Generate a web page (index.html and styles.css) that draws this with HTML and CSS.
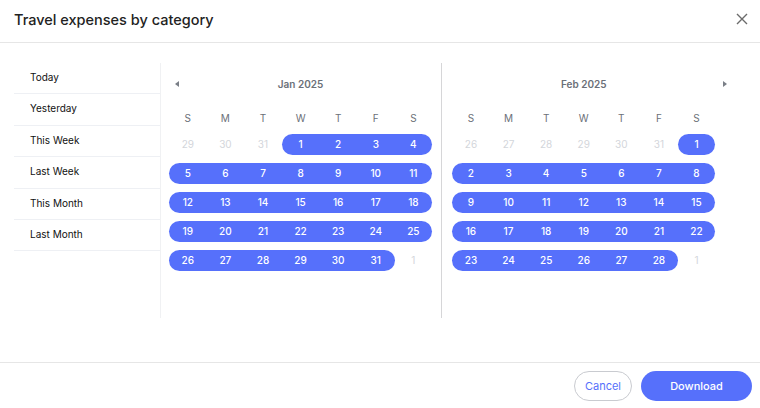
FILE: index.html
```html
<!DOCTYPE html>
<html lang="en">
<head>
    <meta charset="UTF-8">
    <meta name="viewport" content="width=device-width, initial-scale=1.0">
    <title>Travel expenses by category</title>
    <link rel="stylesheet" href="styles.css">
</head>
<body>
<div class="modal">
    <div class="modal-header">
        <h2>Travel expenses by category</h2>
        <button class="close" aria-label="Close">
            <svg width="12" height="12" viewBox="0 0 12 12"><path d="M1 1L11 11M11 1L1 11" stroke="#6b6b6b" stroke-width="1.4" fill="none"/></svg>
        </button>
    </div>

    <div class="modal-body">
        <!-- quick ranges -->
        <ul class="ranges">
            <li>Today</li>
            <li>Yesterday</li>
            <li>This Week</li>
            <li>Last Week</li>
            <li>This Month</li>
            <li>Last Month</li>
        </ul>

        <!-- January -->
        <div class="month first-month">
            <div class="month-head">
                <span class="arrow prev"></span>
                <span class="month-title">Jan 2025</span>
                <span></span>
            </div>
            <div class="weekdays">
                <span>S</span><span>M</span><span>T</span><span>W</span><span>T</span><span>F</span><span>S</span>
            </div>
            <div class="weeks">
                <div class="week">
                    <span class="day muted">29</span><span class="day muted">30</span><span class="day muted">31</span>
                    <span class="day sel start">1</span><span class="day sel">2</span><span class="day sel">3</span><span class="day sel end">4</span>
                </div>
                <div class="week">
                    <span class="day sel start">5</span><span class="day sel">6</span><span class="day sel">7</span><span class="day sel">8</span><span class="day sel">9</span><span class="day sel">10</span><span class="day sel end">11</span>
                </div>
                <div class="week">
                    <span class="day sel start">12</span><span class="day sel">13</span><span class="day sel">14</span><span class="day sel">15</span><span class="day sel">16</span><span class="day sel">17</span><span class="day sel end">18</span>
                </div>
                <div class="week">
                    <span class="day sel start">19</span><span class="day sel">20</span><span class="day sel">21</span><span class="day sel">22</span><span class="day sel">23</span><span class="day sel">24</span><span class="day sel end">25</span>
                </div>
                <div class="week">
                    <span class="day sel start">26</span><span class="day sel">27</span><span class="day sel">28</span><span class="day sel">29</span><span class="day sel">30</span><span class="day sel end">31</span><span class="day muted">1</span>
                </div>
            </div>
        </div>

        <!-- February -->
        <div class="month second-month">
            <div class="month-head">
                <span></span>
                <span class="month-title">Feb 2025</span>
                <span class="arrow next"></span>
            </div>
            <div class="weekdays">
                <span>S</span><span>M</span><span>T</span><span>W</span><span>T</span><span>F</span><span>S</span>
            </div>
            <div class="weeks">
                <div class="week">
                    <span class="day muted">26</span><span class="day muted">27</span><span class="day muted">28</span><span class="day muted">29</span><span class="day muted">30</span><span class="day muted">31</span>
                    <span class="day sel start end">1</span>
                </div>
                <div class="week">
                    <span class="day sel start">2</span><span class="day sel">3</span><span class="day sel">4</span><span class="day sel">5</span><span class="day sel">6</span><span class="day sel">7</span><span class="day sel end">8</span>
                </div>
                <div class="week">
                    <span class="day sel start">9</span><span class="day sel">10</span><span class="day sel">11</span><span class="day sel">12</span><span class="day sel">13</span><span class="day sel">14</span><span class="day sel end">15</span>
                </div>
                <div class="week">
                    <span class="day sel start">16</span><span class="day sel">17</span><span class="day sel">18</span><span class="day sel">19</span><span class="day sel">20</span><span class="day sel">21</span><span class="day sel end">22</span>
                </div>
                <div class="week">
                    <span class="day sel start">23</span><span class="day sel">24</span><span class="day sel">25</span><span class="day sel">26</span><span class="day sel">27</span><span class="day sel end">28</span><span class="day muted">1</span>
                </div>
            </div>
        </div>
    </div>

    <div class="modal-footer">
        <button class="btn btn-outline">Cancel</button>
        <button class="btn btn-primary">Download</button>
    </div>
</div>
</body>
</html>
```

FILE: styles.css
```css
body {
    margin: 0;
    background: #fff;
    font-family: Inter, "Noto Sans", sans-serif;
    color: #1f1f1f;
}

.modal {
    width: 760px;
    height: 408px;
    display: flex;
    flex-direction: column;
    overflow: hidden;
}

.modal-header {
    height: 42px;
    border-bottom: 1px solid #e6e6e6;
    display: flex;
    align-items: center;
    justify-content: space-between;
    padding: 0 12px 0 14px;
    flex-shrink: 0;
}

.modal-header h2 {
    margin: 0 0 4px;
    font-size: 14.5px;
    font-weight: 500;
    color: #222;
}

.close {
    border: none;
    background: none;
    padding: 0;
    width: 12px;
    height: 12px;
    margin-bottom: 4px;
    display: flex;
}

.modal-body {
    height: 319px;
    box-sizing: border-box;
    padding: 20px 0 0 14px;
    display: flex;
    align-items: flex-start;
}

.ranges {
    list-style: none;
    margin: 0;
    padding: 0;
    width: 146px;
}

.ranges li {
    height: 30.4px;
    border-bottom: 1px solid #eef0f4;
    padding-left: 16px;
    font-size: 10px;
    line-height: 29px;
    color: #111;
}

.month {
    height: 255px;
    box-sizing: border-box;
    padding-top: 14px;
}

.first-month {
    border-left: 1px solid #f0f1f3;
    padding-left: 8px;
    padding-right: 9px;
}

.second-month {
    border-left: 1px solid #d6d6d8;
    padding-left: 10px;
}

.month-head {
    display: grid;
    grid-template-columns: 14px 1fr 14px;
    align-items: center;
    height: 14px;
}

.second-month .month-head {
    margin: 0 -13px;
}

.month-title {
    text-align: center;
    font-size: 10px;
    font-weight: 600;
    color: #6b7078;
}

.arrow {
    width: 0;
    height: 0;
    border-top: 3px solid transparent;
    border-bottom: 3px solid transparent;
}

.arrow.prev {
    border-right: 4px solid #7a7f87;
    margin-left: 6px;
}

.arrow.next {
    border-left: 4px solid #7a7f87;
    justify-self: end;
    margin-right: 1px;
}

.weekdays,
.week {
    display: grid;
    grid-template-columns: repeat(7, 37.6px);
    height: 21px;
    align-items: center;
    text-align: center;
    font-size: 10px;
}

.weekdays {
    margin-top: 16px;
    color: #6b7078;
}

.weeks {
    margin-top: 6px;
    display: flex;
    flex-direction: column;
    gap: 8px;
}

.day {
    height: 21px;
    line-height: 21px;
    color: #222;
}

.day.muted {
    color: #d3d6db;
}

.day.sel {
    background: #5670fb;
    color: #fff;
    font-weight: 500;
}

.day.start {
    border-radius: 10.5px 0 0 10.5px;
}

.day.end {
    border-radius: 0 10.5px 10.5px 0;
}

.day.start.end {
    border-radius: 10.5px;
}

.modal-footer {
    flex: 1;
    border-top: 1px solid #e6e6e6;
    display: flex;
    justify-content: flex-end;
    align-items: flex-start;
    gap: 9px;
    padding: 8px 8px 0 0;
}

.btn {
    height: 30px;
    border-radius: 15px;
    font-family: Inter, "Noto Sans", sans-serif;
    font-size: 11px;
    cursor: pointer;
}

.btn-outline {
    width: 58px;
    background: #fff;
    border: 1px solid #c9cbd0;
    color: #5670fb;
}

.btn-primary {
    width: 111px;
    background: #5670fb;
    border: none;
    color: #fff;
    font-weight: 500;
}
```
